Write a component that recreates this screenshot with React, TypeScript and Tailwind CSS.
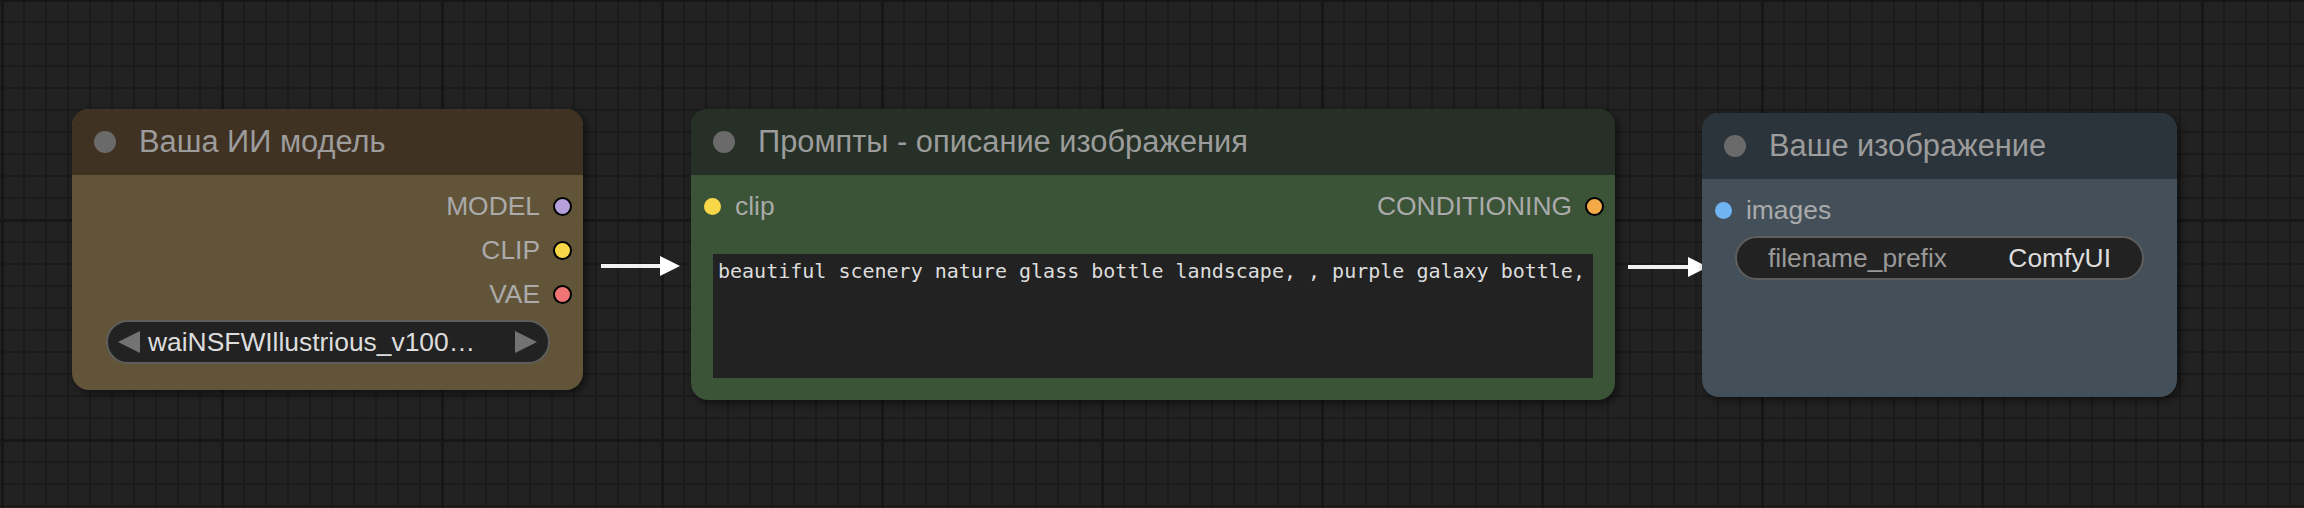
import React from "react";

type NodeProps = {
  title: string;
  titleBg: string;
  bodyBg: string;
  className: string;
  children: React.ReactNode;
};

function GraphNode({ title, titleBg, bodyBg, className, children }: NodeProps) {
  return (
    <div
      className={`flex shrink-0 flex-col overflow-hidden rounded-[17px] shadow-[3px_3px_8px_rgba(0,0,0,0.55)] ${className}`}
      style={{ backgroundColor: bodyBg }}
    >
      <div
        className="flex h-[66px] shrink-0 items-center gap-[23px] pl-[22px]"
        style={{ backgroundColor: titleBg }}
      >
        <span className="h-[22px] w-[22px] rounded-full bg-[#6a6a6a]" />
        <span className="text-[30.8px] leading-none text-[#9c9c9c]">{title}</span>
      </div>
      {children}
    </div>
  );
}

function OutputSlot({ label, color }: { label: string; color: string }) {
  return (
    <div className="flex items-center gap-[13px]">
      <span className="text-[26.4px] leading-none text-[#aaaaaa]">{label}</span>
      <span
        className="h-[19px] w-[19px] rounded-full border-2 border-black"
        style={{ backgroundColor: color }}
      />
    </div>
  );
}

function InputSlot({ label, color }: { label: string; color: string }) {
  return (
    <div className="flex items-center gap-[14px]">
      <span className="h-[17px] w-[17px] rounded-full" style={{ backgroundColor: color }} />
      <span className="text-[26.4px] leading-none text-[#aaaaaa]">{label}</span>
    </div>
  );
}

function Arrow({ width }: { width: number }) {
  return (
    <svg width={width} height={20} viewBox={`0 0 ${width} 20`}>
      <rect x={0} y={8} width={width - 20} height={4} fill="#f2f2f2" />
      <polygon points={`${width - 20},0 ${width},10 ${width - 20},20`} fill="#ffffff" />
    </svg>
  );
}

export default function App() {
  return (
    <div className="h-[508px] w-[2304px] overflow-hidden bg-[#222222] font-['Liberation_Sans',Arial,sans-serif] [background-image:linear-gradient(to_right,#171717_3px,transparent_3px),linear-gradient(to_bottom,#171717_3px,transparent_3px),linear-gradient(to_right,#1b1b1b_2px,transparent_2px),linear-gradient(to_bottom,#1b1b1b_2px,transparent_2px)] [background-position:1px_-1px] [background-size:220px_220px,220px_220px,22px_22px,22px_22px]">
      <div className="flex items-start pl-[72px] pt-[109px]">
        {/* loader */}
        <GraphNode
          title="Ваша ИИ модель"
          titleBg="#403223"
          bodyBg="#625439"
          className="h-[281px] w-[511px]"
        >
          <div className="flex flex-col items-end pr-[11px] pt-[9px]">
            <div className="flex h-[44px] items-center">
              <OutputSlot label="MODEL" color="#b5a0dc" />
            </div>
            <div className="flex h-[44px] items-center">
              <OutputSlot label="CLIP" color="#f8d848" />
            </div>
            <div className="flex h-[44px] items-center">
              <OutputSlot label="VAE" color="#f07474" />
            </div>
          </div>
          <div className="ml-[34px] mr-[33px] mt-[4px] flex h-[44px] items-center rounded-full border-2 border-[#5e5e5e] bg-[#222222] pl-[10px] pr-[11px]">
            <svg width="22" height="22" viewBox="0 0 22 22">
              <polygon points="22,0 0,11 22,22" fill="#737373" />
            </svg>
            <span className="ml-[8px] flex-1 text-[26.4px] leading-none text-[#dddddd]">
              waiNSFWIllustrious_v100…
            </span>
            <svg width="22" height="22" viewBox="0 0 22 22">
              <polygon points="0,0 22,11 0,22" fill="#737373" />
            </svg>
          </div>
        </GraphNode>

        <div className="w-[108px] shrink-0 pl-[18px] pt-[147px]">
          <Arrow width={79} />
        </div>

        {/* prompt */}
        <GraphNode
          title="Промпты - описание изображения"
          titleBg="#263026"
          bodyBg="#3b5337"
          className="h-[291px] w-[924px]"
        >
          <div className="flex h-[44px] items-center justify-between pl-[13px] pr-[11px] mt-[9px]">
            <InputSlot label="clip" color="#f8d848" />
            <OutputSlot label="CONDITIONING" color="#f5aa48" />
          </div>
          <div className="mx-[22px] mt-[26px] h-[124px] overflow-hidden whitespace-nowrap bg-[#222222] pl-[5px] pt-[6px] font-['DejaVu_Sans_Mono',monospace] text-[20px] leading-[23px] text-[#dddddd]">
            beautiful scenery nature glass bottle landscape, , purple galaxy bottle,
          </div>
        </GraphNode>

        <div className="w-[87px] shrink-0 pl-[13px] pt-[148px]">
          <Arrow width={80} />
        </div>

        {/* save */}
        <GraphNode
          title="Ваше изображение"
          titleBg="#2b343b"
          bodyBg="#435059"
          className="mt-[4px] h-[284px] w-[475px]"
        >
          <div className="mt-[9px] flex h-[44px] items-center pl-[13px]">
            <InputSlot label="images" color="#70b4f2" />
          </div>
          <div className="mx-[33px] mt-[4px] flex h-[44px] items-center justify-between rounded-full border-2 border-[#5e5e5e] bg-[#222222] px-[31px] text-[26.4px] leading-none">
            <span className="text-[#999999]">filename_prefix</span>
            <span className="text-[#dddddd]">ComfyUI</span>
          </div>
        </GraphNode>
      </div>
    </div>
  );
}
